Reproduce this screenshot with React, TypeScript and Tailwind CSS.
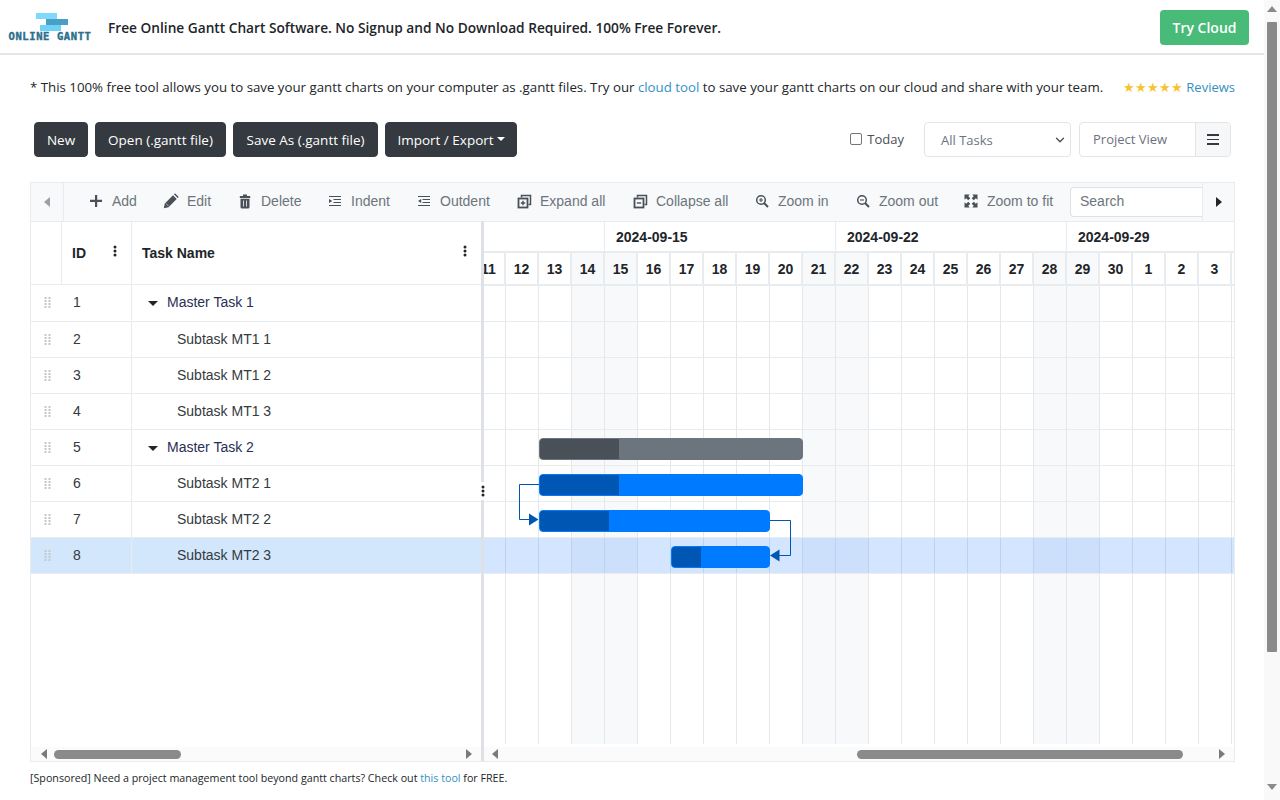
import React from "react";
import { ChevronDown } from "lucide-react";

const ICON = "text-[#495057] shrink-0";
const Plus = () => (
  <svg width="14" height="14" viewBox="0 0 14 14" className={ICON}><path d="M6 1h2.200v4.800H13V8H8.200v5H6V8H1V5.800h5z" fill="currentColor" /></svg>
);
const Pencil = () => (
  <svg width="16" height="16" viewBox="0 0 16 16" className={ICON}><path d="M.8 15.200l1-4.700L10 2.300l3.700 3.700-8.200 8.200zM11 1.300l1-1 3.700 3.700-1 1z" fill="currentColor" /><path d="M3 10.500l2.500 2.500" stroke="#f8f9fa" strokeWidth=".6" /></svg>
);
const Trash = () => (
  <svg width="14" height="15" viewBox="0 0 14 15" className={ICON}><path d="M5 .5h4v1.500h3.200v2H1.800V2H5zM2.500 4.800h9V13a1.500 1.500 0 0 1-1.500 1.500H4A1.500 1.500 0 0 1 2.500 13z" fill="currentColor" /><path d="M5.500 6.500v6M8.500 6.500v6" stroke="#f8f9fa" strokeWidth=".8" /></svg>
);
const Indent = () => (
  <svg width="14" height="14" viewBox="0 0 14 14" className={ICON}><path d="M1 2.500h12M5.500 5.500H13M5.500 8.500H13M1 11.500h12" stroke="currentColor" strokeWidth="1.200" /><path d="M1 5l3.200 2L1 9z" fill="currentColor" /></svg>
);
const Outdent = () => (
  <svg width="14" height="14" viewBox="0 0 14 14" className={ICON}><path d="M1 2.500h12M5.500 5.500H13M5.500 8.500H13M1 11.500h12" stroke="currentColor" strokeWidth="1.200" /><path d="M4.200 5L1 7l3.200 2z" fill="currentColor" /></svg>
);
const Box = ({ plus }: { plus?: boolean }) => (
  <svg width="15" height="15" viewBox="0 0 15 15" className={ICON}>
    <path d="M4.500 3.500V1.500h9v9H11.500" fill="none" stroke="currentColor" strokeWidth="1.500" />
    <rect x="1.500" y="4.500" width="9" height="9" fill="none" stroke="currentColor" strokeWidth="1.800" />
    <path d={plus ? "M3.800 9h4.400M6 6.800v4.400" : "M3.800 9h4.400"} stroke="currentColor" strokeWidth="1.400" />
  </svg>
);
const Mag = ({ plus }: { plus?: boolean }) => (
  <svg width="14" height="14" viewBox="0 0 14 14" className={ICON}>
    <circle cx="6" cy="6" r="4.300" fill="none" stroke="currentColor" strokeWidth="1.500" />
    <path d="M9 9l4 4" stroke="currentColor" strokeWidth="2" />
    <path d={plus ? "M4 6h4M6 4v4" : "M4 6h4"} stroke="currentColor" strokeWidth="1.100" />
  </svg>
);
const Fit = () => (
  <svg width="14" height="14" viewBox="0 0 14 14" className={ICON}>
    <path d="M.5.500h5.200L4.300 2.200 6.300 4.200 4.200 6.300 2.200 4.300.5 5.700zM13.500.500v5.200L11.800 4.300 9.800 6.300 7.700 4.200 9.700 2.200 8.300.500zM.5 13.500V8.300L2.200 9.700 4.200 7.700 6.300 9.800 4.300 11.800 5.700 13.500zM13.500 13.500H8.300L9.700 11.800 7.700 9.800 9.800 7.700 11.800 9.700 13.500 8.300z" fill="currentColor" />
  </svg>
);
const Dots = () => (
  <svg width="4" height="12" viewBox="0 0 4 12" className="text-[#212529]"><circle cx="2" cy="2" r="1.500" fill="currentColor" /><circle cx="2" cy="6" r="1.500" fill="currentColor" /><circle cx="2" cy="10" r="1.500" fill="currentColor" /></svg>
);
const Grip = () => (
  <svg width="8" height="11" viewBox="0 0 8 11" className="text-[#c4c8cc]">
    {[0, 3, 6, 9].map((y) => (
      <g key={y}><rect x="0.500" y={y} width="2" height="2" fill="currentColor" /><rect x="4.500" y={y} width="2" height="2" fill="currentColor" /></g>
    ))}
  </svg>
);
const Tri = ({ dir, cls }: { dir: "l" | "r" | "u" | "d"; cls: string }) => {
  const d = { l: "M7 0v10L1 5z", r: "M1 0v10l6-5z", u: "M0 7h10L5 1z", d: "M0 1h10L5 7z" }[dir];
  return <svg width={dir === "l" || dir === "r" ? 8 : 10} height={dir === "l" || dir === "r" ? 10 : 8} viewBox={dir === "l" || dir === "r" ? "0 0 8 10" : "0 0 10 8"} className={cls}><path d={d} fill="currentColor" /></svg>;
};

const tools: [string, React.ReactNode, string][] = [
  ["Add", <Plus />, "w-[75px]"],
  ["Edit", <Pencil />, "w-[74px]"],
  ["Delete", <Trash />, "w-[90px]"],
  ["Indent", <Indent />, "w-[89px]"],
  ["Outdent", <Outdent />, "w-[100px]"],
  ["Expand all", <Box plus />, "w-[116px]"],
  ["Collapse all", <Box />, "w-[122px]"],
  ["Zoom in", <Mag plus />, "w-[101px]"],
  ["Zoom out", <Mag />, "w-[108px]"],
  ["Zoom to fit", <Fit />, "w-[116px]"],
];

const rows = [
  { id: 1, name: "Master Task 1", master: true },
  { id: 2, name: "Subtask MT1 1" },
  { id: 3, name: "Subtask MT1 2" },
  { id: 4, name: "Subtask MT1 3" },
  { id: 5, name: "Master Task 2", master: true },
  { id: 6, name: "Subtask MT2 1" },
  { id: 7, name: "Subtask MT2 2" },
  { id: 8, name: "Subtask MT2 3", selected: true },
];

const days = [11, 12, 13, 14, 15, 16, 17, 18, 19, 20, 21, 22, 23, 24, 25, 26, 27, 28, 29, 30, 1, 2, 3, 4];
const weekend = new Set([14, 15, 21, 22, 28, 29]);

const Btn = ({ w, children }: { w: string; children: React.ReactNode }) => (
  <button className={`h-[35px] rounded-[4px] bg-[#343a40] border border-[#343a40] text-white text-[13.500px] leading-[21px] pt-[1px] whitespace-nowrap flex items-center justify-center ${w}`}>{children}</button>
);

const Bar = ({ cls, fill, prog, left, top, width, progress }: { cls: string; fill: string; prog: string; left: string; top: string; width: string; progress: string }) => (
  <div className={`absolute h-[22px] rounded-[4px] border overflow-hidden ${cls} ${fill} ${left} ${top} ${width}`}>
    <div className={`h-full ${prog} ${progress}`} />
  </div>
);

export default function App() {
  return (
    <div className="flex w-[1280px] h-[800px] overflow-hidden bg-white text-[#212529] font-['Open_Sans','Noto_Sans',sans-serif]">
      <div className="w-[1264px] flex flex-col">
        <header className="h-[55px] shrink-0 border-b-2 border-[#e4e5e7] flex items-center pl-[9px] pr-[15px] pt-[2px]">
          <div className="w-[82px] self-start flex flex-col items-center pt-[11px]">
            <svg width="33" height="18" viewBox="0 0 33 18" className="ml-[5px]">
              <rect x="0" y="0" width="21" height="6" fill="#80d8ff" />
              <rect x="10" y="6" width="22" height="6" fill="#4a9fc4" />
              <rect x="4" y="12" width="21" height="6" fill="#6fd0f8" />
            </svg>
            <div className="text-[#2a6f8e] text-[10.500px] leading-[11px] font-bold tracking-[0.6px] whitespace-nowrap font-['DejaVu_Sans_Mono',monospace] [-webkit-text-stroke:0.4px_#2a6f8e]">ONLINE GANTT</div>
          </div>
          <div className="ml-[17px] pt-[1px] text-[13.700px] font-semibold whitespace-nowrap text-[#212529]">Free Online Gantt Chart Software. No Signup and No Download Required. 100% Free Forever.</div>
          <button className="ml-auto h-[35px] w-[89px] rounded-[4px] bg-[#48bb78] text-white text-[14px] font-semibold">Try Cloud</button>
        </header>

        <div className="h-[65px] shrink-0 flex items-center pl-[30px] pr-[29px] text-[13.280px] whitespace-nowrap">
          <span>* This 100% free tool allows you to save your gantt charts on your computer as .gantt files. Try our <span className="text-[#3490c4]">cloud tool</span> to save your gantt charts on our cloud and share with your team.</span>
          <span className="ml-auto text-[13px] text-[#3490c4]"><span className="text-[12.500px] text-[#f7c32e]">★★★★★</span> Reviews</span>
        </div>

        <div className="h-[35px] shrink-0 mt-[2px] pl-[34px] pr-[33px] flex items-center">
          <div className="flex gap-[7px]">
            <Btn w="w-[54px]">New</Btn>
            <Btn w="w-[131px]">Open (.gantt file)</Btn>
            <Btn w="w-[145px]">Save As (.gantt file)</Btn>
            <Btn w="w-[132px]">Import / Export<span className="ml-[3px] mt-[-2px] border-x-[4px] border-t-[4px] border-x-transparent border-t-white" /></Btn>
          </div>
          <label className="ml-auto flex items-center text-[13px] text-[#495057] whitespace-nowrap">
            <span className="w-[12px] h-[12px] rounded-[2px] border border-[#767676] bg-white mt-[-2px]" />
            <span className="ml-[5px] pt-[1px]">Today</span>
          </label>
          <div className="ml-[20px] w-[147px] h-[35px] rounded-[4px] border border-[#e2e5e8] flex items-center pl-[16px] pr-[2px] text-[13px] text-[#6b7280]">
            <span className="pt-[2px]">All Tasks</span>
            <ChevronDown size={14} strokeWidth={2.400} className="ml-auto mr-[1px] text-[#495057]" />
          </div>
          <div className="ml-[8px] w-[152px] h-[35px] rounded-[4px] border border-[#e2e5e8] flex items-center text-[13px] text-[#6b7280]">
            <span className="flex-1 pl-[13px]">Project View</span>
            <span className="w-[35px] h-full bg-[#f6f7f9] border-l border-[#e2e5e8] rounded-r-[4px] flex flex-col items-center justify-center gap-[3px]">
              <span className="w-[12px] h-[1.500px] bg-[#343a40]" />
              <span className="w-[12px] h-[1.500px] bg-[#343a40]" />
              <span className="w-[12px] h-[1.500px] bg-[#343a40]" />
            </span>
          </div>
        </div>

        <div className="mt-[25px] ml-[30px] w-[1205px] h-[580px] shrink-0 border border-[#e9ecef] flex flex-col font-['Liberation_Sans',sans-serif]">
          <div className="h-[38px] shrink-0 bg-[#f8f9fa] flex items-stretch">
            <div className="w-[33px] shrink-0 border-r border-[#e9ecef] flex items-center justify-center"><Tri dir="l" cls="text-[#9aa0a6]" /></div>
            <div className="flex-1 min-w-0 flex items-center pb-[2px] pl-[25px] text-[14px] text-[#6c757d] whitespace-nowrap">
              {tools.map(([label, icon, w]) => (
                <div key={label} className={`flex items-center shrink-0 ${w}`}>
                  <span className="w-[14px] flex justify-center">{icon}</span>
                  <span className={label === "Add" ? "ml-[9px]" : "ml-[9px]"}>{label}</span>
                </div>
              ))}
            </div>
            <div className="flex items-center shrink-0 pb-[1px]">
              <div className="w-[132px] h-[30px] bg-white rounded-l-[4px] border border-r-0 border-[#dee2e6] text-[14px] text-[#6c757d] flex items-center pl-[9px]">Search</div>
            </div>
            <div className="w-[32px] shrink-0 border-l border-[#e9ecef] flex items-center justify-center"><Tri dir="r" cls="text-[#212529]" /></div>
          </div>

          <div className="flex-1 min-h-0 flex">
            <div className="w-[450px] shrink-0 flex flex-col">
              <div className="h-[64px] shrink-0 border-y border-[#e9ecef] flex text-[14px] font-bold">
                <div className="w-[31px] border-r border-[#e9ecef]" />
                <div className="w-[70px] border-r border-[#e9ecef] flex items-center justify-between pl-[10px] pr-[14px]"><span>ID</span><span className="mt-[-4px] flex"><Dots /></span></div>
                <div className="flex-1 flex items-center justify-between pl-[10px] pr-[14px]"><span>Task Name</span><span className="mt-[-4px] flex"><Dots /></span></div>
              </div>
              <div className="flex-1 min-h-0 text-[14px] text-[#343a40]">
                {rows.map((r) => (
                  <div key={r.id} className={`flex border-b border-[#e9ecef] ${r.id === 1 ? "h-[37px] pb-[1px]" : "h-[36px]"} ${r.selected ? "bg-[#d3e7fc]" : ""}`}>
                    <div className="w-[31px] flex items-center justify-center pl-[2px]"><Grip /></div>
                    <div className="w-[70px] border-r border-[#e9ecef] flex items-center pl-[11px]">{r.id}</div>
                    <div className="flex-1 flex items-center">
                      {r.master ? (
                        <>
                          <span className="ml-[16px] mr-[9px] mt-[1px] border-x-[5px] border-t-[5px] border-x-transparent border-t-[#212529]" />
                          <span className="text-[#2a2f55]">{r.name}</span>
                        </>
                      ) : (
                        <span className="ml-[45px]">{r.name}</span>
                      )}
                    </div>
                  </div>
                ))}
              </div>
              <div className="h-[14px] shrink-0 bg-[#fbfbfb] flex items-center pl-[9px] pr-[8px] gap-[6px]">
                <Tri dir="l" cls="text-[#7a7a7a]" />
                <div className="w-[127px] h-[9px] rounded-full bg-[#8a8a8a]" />
                <span className="ml-auto flex"><Tri dir="r" cls="text-[#7a7a7a]" /></span>
              </div>
            </div>

            <div className="w-[3px] shrink-0 bg-[#dee2e6] relative">
              <span className="absolute left-[-1px] top-[261px] w-[5px] h-[18px] bg-white flex justify-center items-center"><Dots /></span>
            </div>

            <div className="flex-1 min-w-0 flex flex-col">
              <div className="relative flex-1 min-h-0 overflow-hidden">
                <div className="h-[32px] flex border-y border-[#e9ecef] border-b-[2px] text-[14px] font-bold whitespace-nowrap box-border">
                  <div className="w-[121px] shrink-0 border-r border-[#e9ecef]" />
                  {["2024-09-15", "2024-09-22", "2024-09-29"].map((d) => (
                    <div key={d} className="w-[231px] shrink-0 border-r border-[#e9ecef] flex items-center pl-[11px] pt-[1px]">{d}</div>
                  ))}
                </div>
                <div className="ml-[-11px] flex h-[33px] border-b-[2px] border-[#e9ecef] text-[14px] font-bold">
                  {days.map((d, i) => (
                    <div key={i} className={`w-[33px] shrink-0 border-r-[2px] border-[#e9ecef] flex items-center justify-center pt-[1px] ${weekend.has(d) ? "bg-[#f8f9fa]" : ""}`}>{d}</div>
                  ))}
                </div>
                <div className="ml-[-11px] flex h-[458px]">
                  {days.map((d, i) => (
                    <div key={i} className={`w-[33px] shrink-0 border-r border-[#e5e8eb] ${weekend.has(d) ? "bg-[#f8f9fa]" : ""}`} />
                  ))}
                </div>
                {/* row separators, over the day columns */}
                <div className="absolute left-0 right-0 top-[64px]">
                  {rows.map((r) => (
                    <div key={r.id} className={`border-b border-[#e9ecef] ${r.id === 1 ? "h-[37px]" : "h-[36px]"} ${r.selected ? "bg-[#0d6efd]/18" : ""}`} />
                  ))}
                </div>
                <Bar cls="border-[#6c757d]" fill="bg-[#6c757d]" prog="bg-[#495057]" left="left-[55px]" top="top-[217px]" width="w-[264px]" progress="w-[79px]" />
                <Bar cls="border-[#007bff]" fill="bg-[#007bff]" prog="bg-[#0056b3]" left="left-[55px]" top="top-[253px]" width="w-[264px]" progress="w-[79px]" />
                <Bar cls="border-[#007bff]" fill="bg-[#007bff]" prog="bg-[#0056b3]" left="left-[55px]" top="top-[289px]" width="w-[231px]" progress="w-[69px]" />
                <Bar cls="border-[#007bff]" fill="bg-[#007bff]" prog="bg-[#0056b3]" left="left-[187px]" top="top-[325px]" width="w-[99px]" progress="w-[29px]" />
                <svg width="320" height="120" viewBox="0 0 320 120" className="absolute left-0 top-[250px]">
                  <path d="M55 13.500H35.500V48.500H46" fill="none" stroke="#0056b3" strokeWidth="1" />
                  <path d="M45 42.500l9.500 6-9.500 6z" fill="#0056b3" />
                  <path d="M286 49.500H306.500V84.500H295" fill="none" stroke="#0056b3" strokeWidth="1" />
                  <path d="M295.500 78.500l-9.500 6 9.500 6z" fill="#0056b3" />
                </svg>
              </div>
              <div className="h-[14px] shrink-0 bg-[#fbfbfb] flex items-center pl-[7px] pr-[8px]">
                <Tri dir="l" cls="text-[#7a7a7a]" />
                <div className="ml-[358px] w-[326px] h-[9px] rounded-full bg-[#8a8a8a]" />
                <span className="ml-auto flex"><Tri dir="r" cls="text-[#7a7a7a]" /></span>
              </div>
            </div>
          </div>
        </div>

        <div className="ml-[30px] mt-[9px] text-[10.700px] leading-[15px] whitespace-nowrap">[Sponsored] Need a project management tool beyond gantt charts? Check out <span className="text-[#3490c4]">this tool</span> for FREE.</div>
      </div>

      <div className="w-[16px] h-[800px] shrink-0 bg-[#f9f9f9] flex flex-col items-center pt-[5px] pb-[9px]">
        <Tri dir="u" cls="text-[#8a8a8a]" />
        <div className="mt-[9px] w-[10px] h-[630px] bg-[#8a8a8a] rounded-[1px]" />
        <span className="mt-auto flex"><Tri dir="d" cls="text-[#8a8a8a]" /></span>
      </div>
    </div>
  );
}
